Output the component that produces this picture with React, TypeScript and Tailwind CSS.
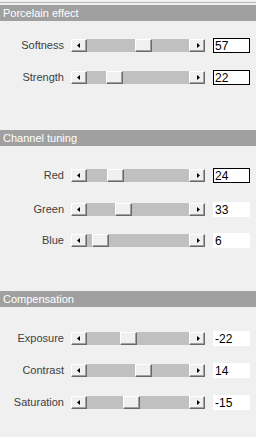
import React from 'react';

type Slider = {
  label: string;
  value: number;
  min: number;
  max: number;
  boxed?: boolean;
  mt: string;
};

type Section = {
  title: string;
  mt: string;
  sliders: Slider[];
};

const sections: Section[] = [
  {
    title: 'Porcelain effect',
    mt: 'mt-[2px]',
    sliders: [
      { label: 'Softness', value: 57, min: 0, max: 100, boxed: true, mt: 'mt-[18px]' },
      { label: 'Strength', value: 22, min: 0, max: 100, boxed: true, mt: 'mt-[19px]' },
    ],
  },
  {
    title: 'Channel tuning',
    mt: 'mt-[46px]',
    sliders: [
      { label: 'Red', value: 24, min: 0, max: 100, boxed: true, mt: 'mt-[23px]' },
      { label: 'Green', value: 33, min: 0, max: 100, mt: 'mt-[21px]' },
      { label: 'Blue', value: 6, min: 0, max: 100, mt: 'mt-[18px]' },
    ],
  },
  {
    title: 'Compensation',
    mt: 'mt-[44px]',
    sliders: [
      { label: 'Exposure', value: -22, min: -100, max: 100, mt: 'mt-[25px]' },
      { label: 'Contrast', value: 14, min: -100, max: 100, mt: 'mt-[19px]' },
      { label: 'Saturation', value: -15, min: -100, max: 100, mt: 'mt-[19px]' },
    ],
  },
];

const Arrow = ({ dir }: { dir: 'left' | 'right' }) => (
  <svg width="3" height="5" viewBox="0 0 3 5" className="block">
    {dir === 'left' ? (
      <path d="M0 2.5 L3 0 L3 5 Z" fill="#000" />
    ) : (
      <path d="M3 2.5 L0 0 L0 5 Z" fill="#000" />
    )}
  </svg>
);

const Bevel = ({ className = '', children }: { className?: string; children?: React.ReactNode }) => (
  <div
    className={`h-[13px] border-t border-l border-t-white border-l-white border-r border-b border-r-[#696969] border-b-[#696969] bg-[#f0f0f0] shadow-[inset_-1px_-1px_0_#a0a0a0] flex items-center justify-center ${className}`}
  >
    {children}
  </div>
);

const ScrollSlider = ({ s }: { s: Slider }) => {
  const travel = 85;
  const left = Math.round(((s.value - s.min) / (s.max - s.min)) * travel);
  return (
    <div className={`flex h-[13px] items-center ${s.mt}`}>
      <div className="w-[64px] text-right text-[11px] leading-none text-[#404040]">{s.label}</div>
      <div className="ml-[7px] flex h-[13px] w-[134px] bg-[#c0c0c0]">
        <Bevel className="w-[16px] pr-[2px]">
          <Arrow dir="left" />
        </Bevel>
        <div className="relative h-[13px] flex-1">
          <div className="absolute top-0" style={{ left }}>
            <Bevel className="w-[17px]" />
          </div>
        </div>
        <Bevel className="w-[16px] pl-[2px]">
          <Arrow dir="right" />
        </Bevel>
      </div>
      <div
        className={`ml-[8px] flex h-[15px] w-[37px] items-center bg-white text-[12px] leading-none text-black ${
          s.boxed ? 'border border-black pl-[1px]' : 'pl-[2px]'
        }`}
      >
        {s.value}
      </div>
    </div>
  );
};

export default function App() {
  return (
    <div
      className="h-[437px] w-[256px] overflow-hidden bg-[#f0f0f0]"
      style={{ fontFamily: '"Liberation Sans", Arial, sans-serif' }}
    >
      <div className="mt-[2px] h-px bg-[#b4b4b4]" />
      {sections.map((sec) => (
        <div key={sec.title}>
          <div
            className={`${sec.mt} flex h-[16px] items-center bg-[#a0a0a0] pl-[3px] text-[11px] leading-none text-white`}
          >
            {sec.title}
          </div>
          {sec.sliders.map((s) => (
            <ScrollSlider key={s.label} s={s} />
          ))}
        </div>
      ))}
    </div>
  );
}
